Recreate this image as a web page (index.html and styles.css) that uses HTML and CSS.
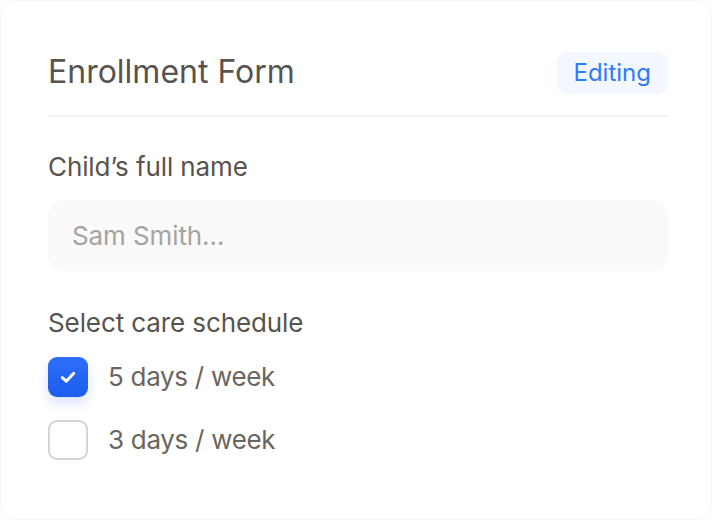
FILE: index.html
```html
<!DOCTYPE html>
<html lang="en">
<head>
<meta charset="utf-8">
<link rel="stylesheet" href="styles.css">
</head>
<body>
<div class="card">
  <div class="header">
    <h1 class="title">Enrollment Form</h1>
    <span class="badge">Editing</span>
  </div>
  <div class="field">
    <label class="label">Child’s full name</label>
    <div class="input">Sam Smith...</div>
  </div>
  <div class="field field-schedule">
    <div class="label">Select care schedule</div>
    <div class="options">
      <div class="option">
        <span class="box checked">
          <svg width="22" height="22" viewBox="0 0 20 20"><path d="M4.8 10.6L8.4 13.8L15.2 6.6" fill="none" stroke="#fff" stroke-width="2.7" stroke-linecap="round" stroke-linejoin="round"/></svg>
        </span>
        <span class="opt-text">5 days / week</span>
      </div>
      <div class="option">
        <span class="box"></span>
        <span class="opt-text">3 days / week</span>
      </div>
    </div>
  </div>
</div>
</body>
</html>
```
FILE: styles.css
```css
* { box-sizing: border-box; }
html, body { margin: 0; padding: 0; background: #fff; }
body { font-family: Inter, "Noto Sans", sans-serif; width: 712px; height: 520px; }
.card {
  width: 712px; height: 520px;
  border: 1px solid #f5f5f5;
  border-radius: 18px;
  padding: 48px 43px 0 47px;
  background: #fff;
}
.header {
  display: flex; align-items: center; justify-content: space-between;
  padding-bottom: 20px;
  border-bottom: 2px solid #f3f3f3;
  height: 68px;
}
.title { margin: 0; font-size: 32px; line-height: 40px; font-weight: 400; color: #57534e; }
.badge {
  background: #f3f7ff; color: #2f7bf5; font-size: 24px;
  padding: 0 17px; height: 42px; line-height: 42px; border-radius: 10px;
  margin-top: 2px;
}
.field { margin-top: 34px; }
.field-schedule { margin-top: 36px; }
.label { display: block; font-size: 26px; color: #57534e; line-height: 32px; letter-spacing: -0.1px; }
.input {
  margin-top: 17px; height: 71px; border-radius: 16px; background: #fafafa;
  padding: 0 24px; display: flex; align-items: center;
  font-size: 26px; color: #a8a29e; letter-spacing: -0.1px;
}
.options { margin-top: 18px; display: flex; flex-direction: column; gap: 23px; }
.option { display: flex; align-items: center; gap: 20px; }
.box {
  width: 40px; height: 40px; border-radius: 9px; border: 2px solid #d6d3d1;
  display: flex; align-items: center; justify-content: center; background: #fff;
  flex: none;
}
.box.checked {
  border: none; background: linear-gradient(#2f6ff7, #1c5cf0);
  box-shadow: 0 6px 12px rgba(37, 99, 235, 0.18);
}
.opt-text { font-size: 26px; line-height: 32px; color: #6b6560; letter-spacing: -0.3px; }
```
